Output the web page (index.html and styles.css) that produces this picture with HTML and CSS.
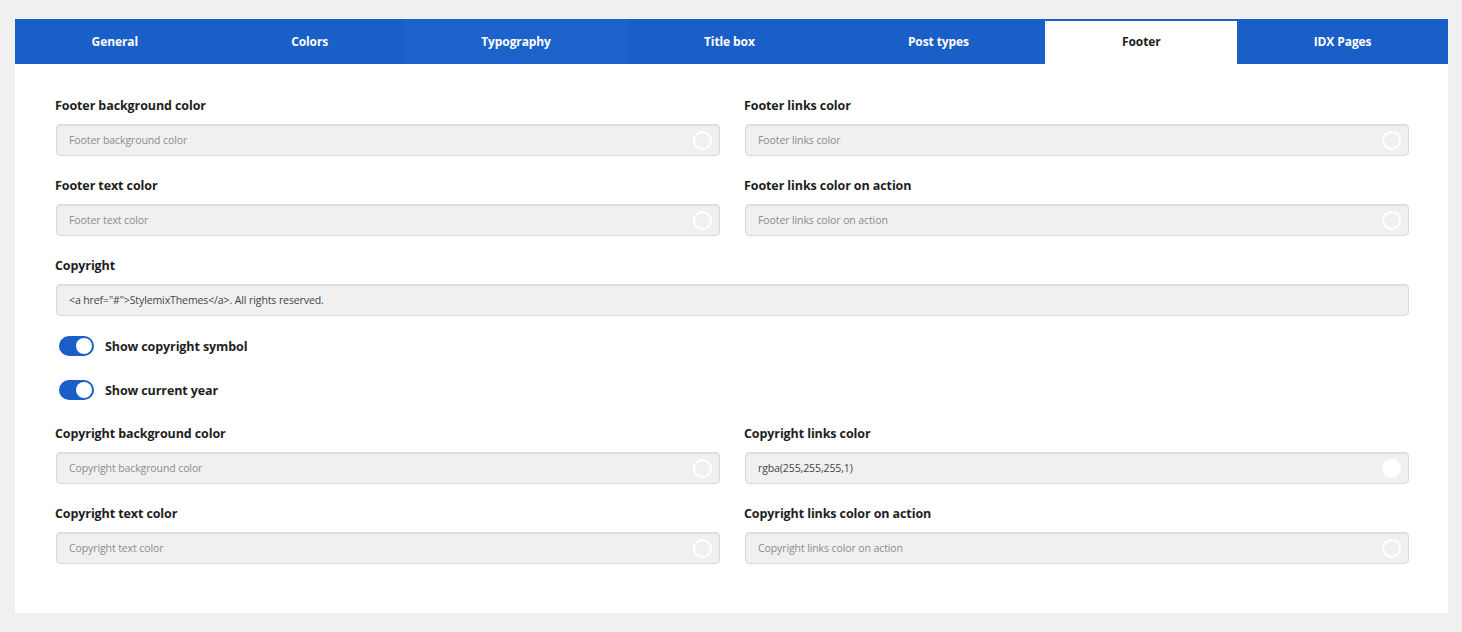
FILE: index.html
```html
<!DOCTYPE html>
<html lang="en">
<head>
<meta charset="utf-8">
<title>Theme options - Footer</title>
<link rel="stylesheet" href="styles.css">
</head>
<body>
<div class="panel">
  <nav class="tabs">
    <a class="tab">General</a>
    <a class="tab">Colors</a>
    <a class="tab tab-hover">Typography</a>
    <a class="tab">Title box</a>
    <a class="tab">Post types</a>
    <a class="tab tab-active">Footer</a>
    <a class="tab">IDX Pages</a>
  </nav>
  <div class="content">
    <div class="grid">
      <div class="field">
        <div class="label">Footer background color</div>
        <div class="input"><span class="ph">Footer background color</span><span class="swatch"></span></div>
      </div>
      <div class="field">
        <div class="label">Footer links color</div>
        <div class="input"><span class="ph">Footer links color</span><span class="swatch"></span></div>
      </div>
      <div class="field">
        <div class="label">Footer text color</div>
        <div class="input"><span class="ph">Footer text color</span><span class="swatch"></span></div>
      </div>
      <div class="field">
        <div class="label">Footer links color on action</div>
        <div class="input"><span class="ph">Footer links color on action</span><span class="swatch"></span></div>
      </div>
    </div>
    <div class="field field-copy">
      <div class="label">Copyright</div>
      <div class="input"><span class="val">&lt;a href="#"&gt;StylemixThemes&lt;/a&gt;. All rights reserved.</span></div>
    </div>
    <div class="toggle-row">
      <span class="toggle"><span class="knob"></span></span>
      <span class="toggle-label">Show copyright symbol</span>
    </div>
    <div class="toggle-row toggle-row-last">
      <span class="toggle"><span class="knob"></span></span>
      <span class="toggle-label">Show current year</span>
    </div>
    <div class="grid">
      <div class="field">
        <div class="label">Copyright background color</div>
        <div class="input"><span class="ph">Copyright background color</span><span class="swatch"></span></div>
      </div>
      <div class="field">
        <div class="label">Copyright links color</div>
        <div class="input"><span class="val">rgba(255,255,255,1)</span><span class="swatch swatch-filled"></span></div>
      </div>
      <div class="field field-last">
        <div class="label">Copyright text color</div>
        <div class="input"><span class="ph">Copyright text color</span><span class="swatch"></span></div>
      </div>
      <div class="field field-last">
        <div class="label">Copyright links color on action</div>
        <div class="input"><span class="ph">Copyright links color on action</span><span class="swatch"></span></div>
      </div>
    </div>
  </div>
</div>
</body>
</html>
```

FILE: styles.css
```css
* { box-sizing: border-box; }
html, body { margin: 0; padding: 0; }
body {
  background: #f0f0f0;
  font-family: "Open Sans", "Noto Sans", "Liberation Sans", sans-serif;
  color: #1e1e1e;
  padding: 19px 14px 19px 15px;
  height: 632px;
}
.panel {
  background: #fff;
  height: 594px;
}
.tabs {
  display: flex;
  height: 45px;
  background: #1a5ec7;
}
.tab {
  flex: 1 1 auto;
  display: flex;
  align-items: center;
  justify-content: center;
  color: #fff;
  font-weight: 700;
  font-size: 12px;
  letter-spacing: -0.1px;
  cursor: pointer;
}
.tab-hover { background: #1d62ca; }
.tab-active {
  background: #fff;
  color: #1e1e1e;
  margin-top: 2px;
  padding-bottom: 2px;
}
.content {
  padding: 33px 39px 0 40px;
}
.grid {
  display: grid;
  grid-template-columns: 1fr 1fr;
  column-gap: 24px;
}
.field { margin-bottom: 21px; }
.field-copy { margin-bottom: 20px; }
.field-last { margin-bottom: 0; }
.label {
  font-size: 12.5px;
  font-weight: 700;
  line-height: 18px;
  margin-bottom: 9px;
  letter-spacing: -0.1px;
}
.input {
  height: 32px;
  margin-left: 1px;
  background: #f0f0f0;
  border: 1px solid #dadada;
  border-radius: 4px;
  box-shadow: inset 0 1px 2px rgba(0,0,0,0.06);
  display: flex;
  align-items: center;
  justify-content: space-between;
  padding: 0 7px 0 12px;
}
.ph {
  font-size: 10.5px;
  color: #8c8c8c;
  letter-spacing: -0.1px;
}
.val {
  font-size: 10.5px;
  color: #444;
  letter-spacing: -0.1px;
}
.swatch {
  width: 19px;
  height: 19px;
  border-radius: 50%;
  border: 2px solid #fff;
  flex: none;
}
.swatch-filled { background: #fff; }
.toggle-row {
  display: flex;
  align-items: center;
  height: 20px;
  margin-bottom: 24px;
  padding-left: 4px;
}
.toggle-row-last { margin-bottom: 25px; }
.toggle {
  width: 35px;
  height: 20px;
  border-radius: 10px;
  background: #1a5ec7;
  display: flex;
  align-items: center;
  justify-content: flex-end;
  padding: 0 2px;
  flex: none;
}
.knob {
  width: 16px;
  height: 16px;
  border-radius: 50%;
  background: #fff;
}
.toggle-label {
  margin-left: 11px;
  font-size: 12.5px;
  font-weight: 700;
  letter-spacing: -0.1px;
}
```
